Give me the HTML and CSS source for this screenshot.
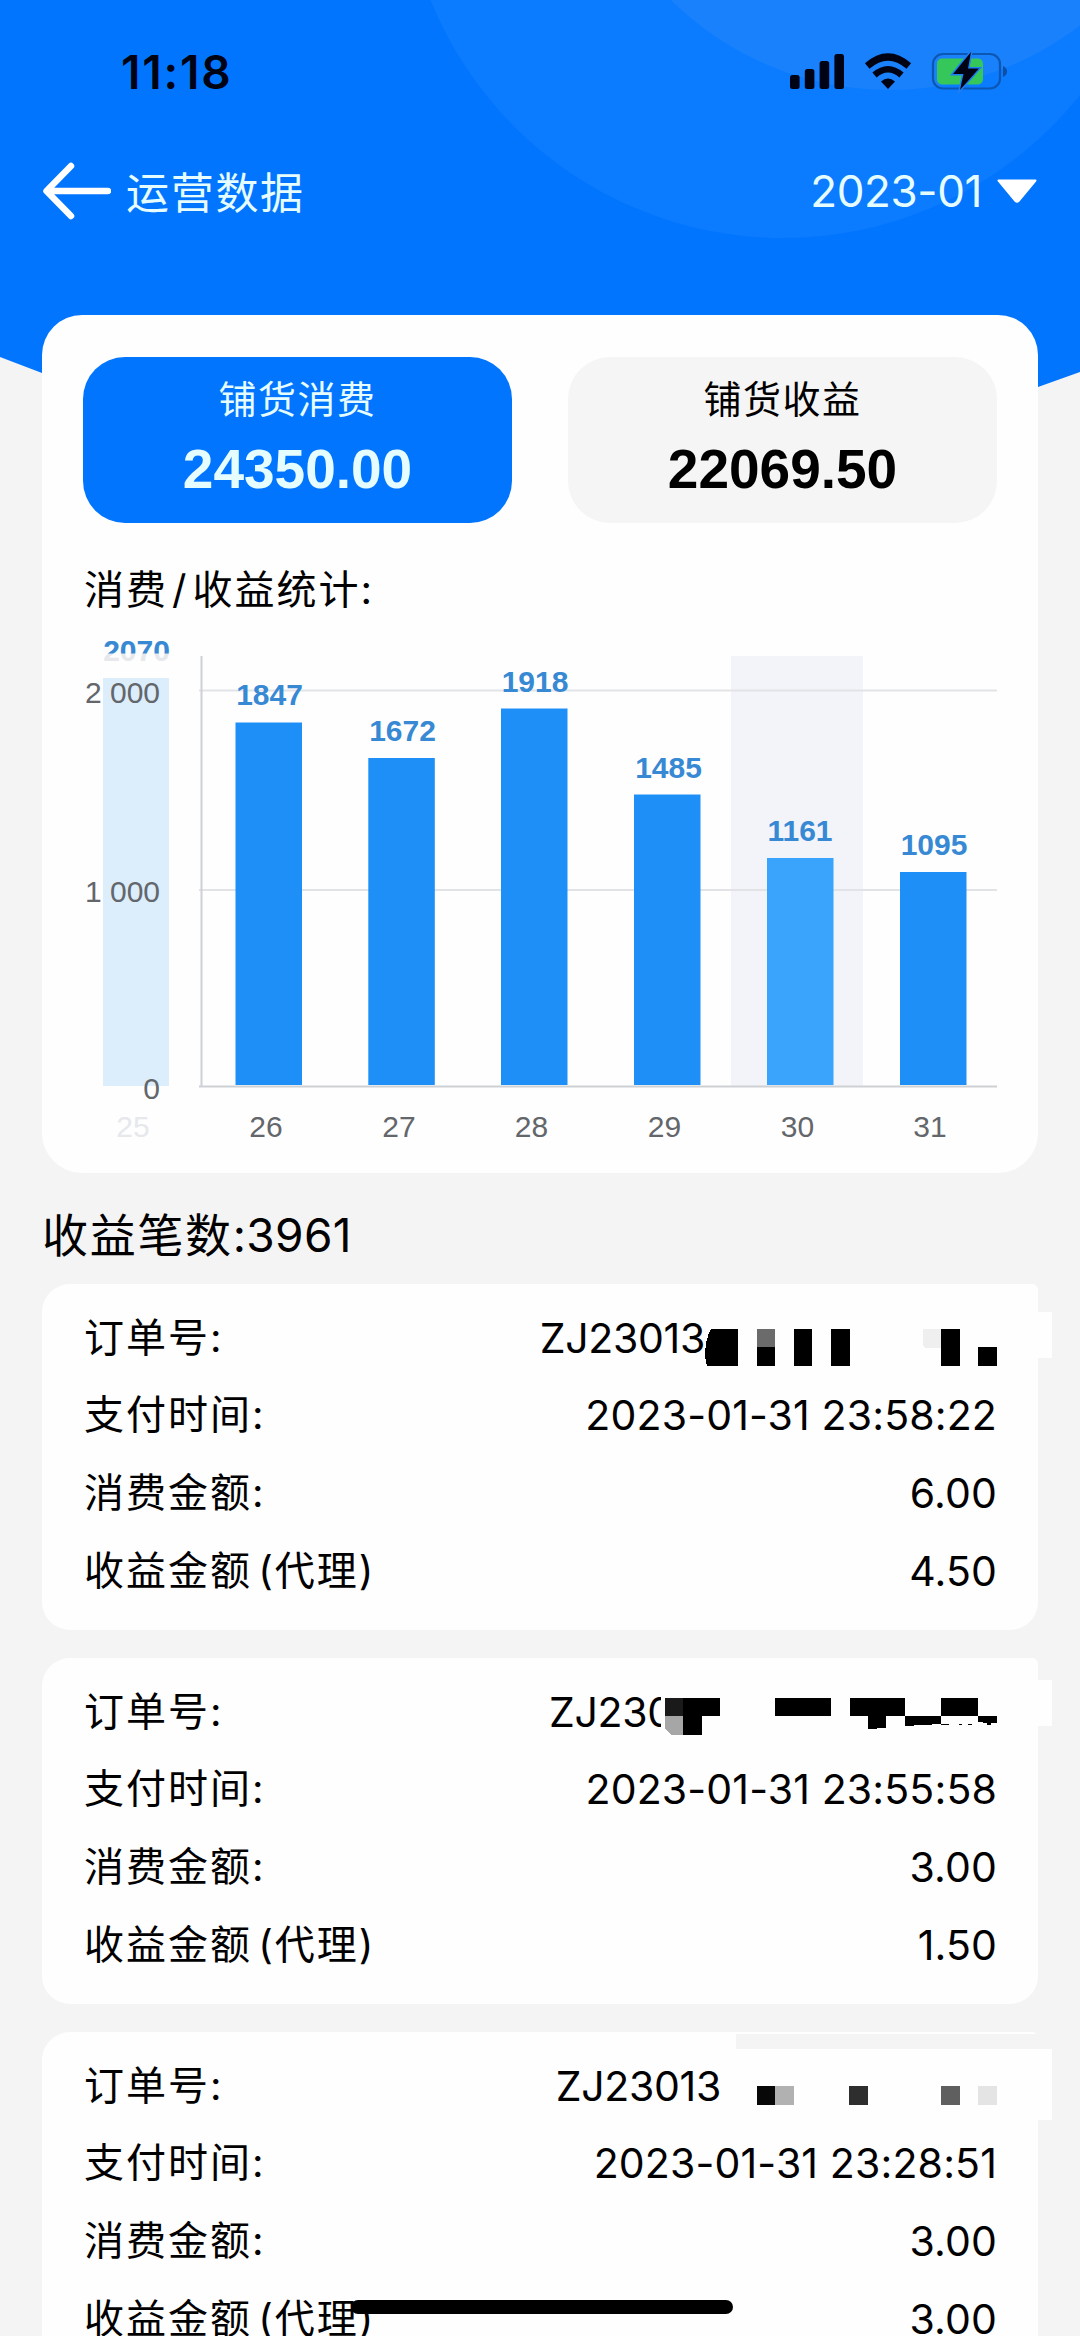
FILE: index.html
```html
<!DOCTYPE html>
<html lang="zh-CN">
<head>
    <meta charset="UTF-8">
    <title>运营数据</title>
    <link rel="stylesheet" href="styles.css">
</head>
<body>
    <div class="page">
        <svg class="backdrop" viewBox="0 0 1080 420">
            <path d="M0 0H1080V372L1038 387V420H42V373L0 357Z" fill="#0275ff"/>
            <circle cx="783" cy="-142" r="380" fill="#0b7bff"/>
            <circle cx="890" cy="-222" r="312" fill="#1981fb"/>
        </svg>

        <div class="status-bar">
            <span class="clock">11:18</span>
            <svg class="status-icons" width="220" height="44" viewBox="788 50 220 44">
                <g fill="#000314">
                    <rect x="790" y="75" width="9.6" height="14" rx="2.5"/>
                    <rect x="804.8" y="69" width="9.6" height="20" rx="2.5"/>
                    <rect x="819.6" y="61" width="9.6" height="28" rx="2.5"/>
                    <rect x="834.4" y="54" width="9.6" height="35" rx="2.5"/>
                    <path d="M888 89L881 81.5Q888 75.500 895 81.500Z"/>
                </g>
                <g fill="none" stroke="#000314">
                    <path d="M867.200 66Q888 48 908.800 66" stroke-width="7"/>
                    <path d="M874.500 75Q888 63.500 901.500 75" stroke-width="6.500"/>
                </g>
                <rect x="933" y="54" width="67" height="34.500" rx="10" fill="none" stroke="#0d57b4" stroke-width="2.200"/>
                <path d="M1003 66Q1007 68 1007 71.500T1003 77Z" fill="#0d4fa6"/>
                <rect x="937" y="58.500" width="46" height="26" rx="5" fill="#35c759"/>
                <path d="M971 52L953 74H963.500L960 90L979 68.500H968Z" fill="#000314" stroke="#1d7ff2" stroke-width="3" paint-order="stroke"/>
            </svg>
        </div>

        <div class="nav-bar">
            <svg width="68" height="58" viewBox="0 0 68 58">
                <path d="M28 4L3.500 29L28 54M4 29H65" fill="none" stroke="#fff" stroke-width="6.500" stroke-linecap="round" stroke-linejoin="round"/>
            </svg>
            <span class="nav-title">运营数据</span>
            <span class="month">2023-01</span>
            <svg width="42" height="24" viewBox="0 0 42 24">
                <path d="M2.500 1.500H39.500L22.500 22Q21 23.500 19.500 22Z" fill="#fff" stroke="#fff" stroke-width="2" stroke-linejoin="round"/>
            </svg>
        </div>

        <div class="card summary">
            <div class="tabs">
                <div class="tab active">
                    <div class="tab-label">铺货消费</div>
                    <div class="tab-value">24350.00</div>
                </div>
                <div class="tab">
                    <div class="tab-label">铺货收益</div>
                    <div class="tab-value">22069.50</div>
                </div>
            </div>
            <div class="chart-title">消费<span class="slash">/</span>收益统计:</div>
            <svg class="chart" viewBox="83 630 914 520">
                <defs>
                    <clipPath id="label-top"><rect x="90" y="630" width="100" height="23.500"/></clipPath>
                </defs>
                <rect x="731" y="656" width="132" height="430" fill="#f2f4f9"/>
                <g stroke="#e1e3e7" stroke-width="2">
                    <path d="M199 690.500H997M199 890H997"/>
                </g>
                <path d="M201.500 656V1087M199 1086.500H997" fill="none" stroke="#cdd0d4" stroke-width="2"/>

                <rect x="103" y="678" width="66" height="408" fill="#dcedfc"/>
                <g fill="#1f8ff8">
                    <rect x="235.500" y="722.500" width="66.500" height="362.500"/>
                    <rect x="368.300" y="758" width="66.500" height="327"/>
                    <rect x="501" y="708.500" width="66.500" height="376.500"/>
                    <rect x="634" y="794.500" width="66.500" height="290.500"/>
                    <rect x="767" y="858" width="66.500" height="227" fill="#3aa3fb"/>
                    <rect x="900" y="872" width="66.500" height="213"/>
                </g>

                <g class="bar-value">
                    <text class="faded" x="136.500" y="661">2070</text>
                    <text x="136.500" y="661" clip-path="url(#label-top)">2070</text>
                    <text x="269.500" y="705">1847</text>
                    <text x="402.500" y="741">1672</text>
                    <text x="535" y="691.500">1918</text>
                    <text x="668.500" y="777.500">1485</text>
                    <text x="800" y="840.500">1161</text>
                    <text x="934" y="855">1095</text>
                </g>
                <g class="axis-y">
                    <text x="160" y="702.500">2 000</text>
                    <text x="160" y="902">1 000</text>
                    <text x="160" y="1098.500">0</text>
                </g>
                <g class="axis-x">
                    <text class="faded" x="133" y="1137">25</text>
                    <text x="266" y="1137">26</text>
                    <text x="399" y="1137">27</text>
                    <text x="531.500" y="1137">28</text>
                    <text x="664.500" y="1137">29</text>
                    <text x="797.500" y="1137">30</text>
                    <text x="930" y="1137">31</text>
                </g>
            </svg>
        </div>

        <div class="count">收益笔数<span class="count-number">:3961</span></div>

        <div class="card order order-1">
            <div class="row">
                <span class="label">订单号:</span>
                <span class="value order-no">ZJ23013</span>
                <svg class="mask" width="292" height="37" viewBox="0 0 292 37" shape-rendering="crispEdges">
                    <path d="M6 0H33V37H2L0 28Q0 10 6 0ZM89 0h18v37h-18zM126 0h19v37h-19zM236 0h19v37h-19zM273 18h19v19h-19zM52 18h18v19h-18z"/>
                    <path d="M52 0h18v18h-18z" fill="#6b6b6b"/>
                    <path d="M218 0h18v19h-16l-2 -3z" fill="#efefef"/>
                </svg>
            </div>
            <div class="row"><span class="label">支付时间:</span><span class="value">2023-01-31 23:58:22</span></div>
            <div class="row"><span class="label">消费金额:</span><span class="value">6.00</span></div>
            <div class="row"><span class="label">收益金额 (代理)</span><span class="value">4.50</span></div>
        </div>

        <div class="card order order-2">
            <div class="row">
                <span class="label">订单号:</span>
                <span class="value order-no cut">ZJ230</span>
                <svg class="mask" width="332" height="37" viewBox="0 0 332 37" shape-rendering="crispEdges">
                    <path d="M18 0h37v18h-18v19h-19zM110 0h56v18h-56zM185 0h55v18h-19v12l-18 1v-13h-18zM276 0h37v18h-37zM240 18h36v8l-36 2zM313 18h19v7h-6v2h-4v-2l-9 -1z"/>
                    <path d="M276 26h8v1h-8zM294 26h3v1h-3zM303 26h4v1h-4z"/>
                    <path d="M0 0h18v18h-18z" fill="#1a1a1a"/>
                    <path d="M0 18h18v19h-12l-6 -6z" fill="#a6a6a6"/>
                </svg>
            </div>
            <div class="row"><span class="label">支付时间:</span><span class="value">2023-01-31 23:55:58</span></div>
            <div class="row"><span class="label">消费金额:</span><span class="value">3.00</span></div>
            <div class="row"><span class="label">收益金额 (代理)</span><span class="value">1.50</span></div>
        </div>

        <div class="card order order-3">
            <div class="row">
                <span class="label">订单号:</span>
                <span class="value order-no">ZJ23013</span>
                <svg class="mask" width="276" height="37" viewBox="0 0 276 37" shape-rendering="crispEdges">
                    <rect x="36" y="18" width="18" height="19" fill="#080808"/>
                    <rect x="54" y="18" width="19" height="19" fill="#b1b1b1"/>
                    <rect x="128" y="18" width="19" height="19" fill="#2e2e2e"/>
                    <rect x="220" y="18" width="19" height="19" fill="#5f5f5f"/>
                    <rect x="257" y="18" width="19" height="19" fill="#e4e4e4"/>
                </svg>
            </div>
            <div class="row"><span class="label">支付时间:</span><span class="value">2023-01-31 23:28:51</span></div>
            <div class="row"><span class="label">消费金额:</span><span class="value">3.00</span></div>
            <div class="row"><span class="label">收益金额 (代理)</span><span class="value">3.00</span></div>
        </div>

        <div class="home-indicator"></div>
    </div>
</body>
</html>
```
FILE: styles.css
```css
* {
    box-sizing: border-box;
}

body {
    margin: 0;
    background: #f4f4f4;
    font-family: Inter, "Noto Sans CJK SC", sans-serif;
    color: #000;
}

.page {
    position: relative;
    width: 1080px;
    height: 2336px;
    overflow: hidden;
}

.backdrop {
    position: absolute;
    top: 0;
    left: 0;
    width: 1080px;
    height: 420px;
    z-index: -1;
}

/* status bar */
.status-bar {
    display: flex;
    align-items: center;
    justify-content: space-between;
    height: 144px;
    padding: 0 72px 0 121px;
}

.clock {
    font-size: 46px;
    font-weight: 600;
    letter-spacing: 1.8px;
    color: #000314;
}

/* nav bar */
.nav-bar {
    display: flex;
    align-items: center;
    height: 94px;
    padding: 0 42px 0 43px;
    color: #e6fdff;
}

.nav-title {
    margin-left: 15px;
    margin-bottom: 3px;
    font-size: 43px;
    letter-spacing: 1.7px;
}

.month {
    margin-left: auto;
    margin-right: 14px;
    font-size: 44px;
    letter-spacing: -0.4px;
}

/* summary card */
.card {
    margin: 0 42px;
    background: #fefefe;
}

.summary {
    height: 858px;
    margin-top: 77px;
    padding: 42px 41px 0;
    border-radius: 40px;
}

.tabs {
    display: flex;
    justify-content: space-between;
}

.tab {
    width: 429px;
    height: 166px;
    padding-top: 14px;
    border-radius: 42px;
    background: #f5f5f5;
    text-align: center;
}

.tab.active {
    background: #0275ff;
    color: #e6fdff;
}

.tab-label {
    font-size: 38px;
    line-height: 56px;
    letter-spacing: 1.5px;
}

.tab-value {
    font-family: "Liberation Sans", Arial, sans-serif;
    font-size: 55px;
    font-weight: bold;
    line-height: 84px;
}

.chart-title {
    height: 107px;
    padding-top: 35px;
    padding-left: 1px;
    font-size: 40px;
    line-height: 64px;
    letter-spacing: 2px;
}

.slash {
    margin: 0 4px;
}

.chart {
    display: block;
    width: 914px;
    height: 520px;
    font-family: "Liberation Sans", Arial, sans-serif;
    font-size: 30px;
}

.bar-value {
    fill: #3789d3;
    font-weight: bold;
    text-anchor: middle;
}

.axis-y {
    fill: #63666b;
    text-anchor: end;
}

.axis-x {
    fill: #63666b;
    text-anchor: middle;
}

.chart .faded {
    fill: #e6e8ec;
}

/* order list */
.count {
    height: 111px;
    padding-left: 42px;
    font-size: 46px;
    line-height: 124px;
    letter-spacing: 1.7px;
}

.count-number {
    letter-spacing: 0.3px;
}

.order {
    position: relative;
    height: 346px;
    margin-bottom: 28px;
    padding: 15px 41px 0 42px;
    border-radius: 28px;
    border-top-right-radius: 6px;
}

/* strip sticking out of the right edge */
.order::after {
    content: "";
    position: absolute;
    top: 28px;
    right: -14px;
    width: 20px;
    height: 46px;
    background: #fefefe;
}

.order-2::after {
    top: 22px;
}

.order-3::after {
    top: 17px;
    height: 71px;
}

.order-3::before {
    content: "";
    position: absolute;
    top: 2px;
    right: 0;
    width: 302px;
    height: 15px;
    background: #f4f4f4;
}

.row {
    display: flex;
    align-items: center;
    height: 77.600px;
    font-size: 40px;
    line-height: 60px;
}

.label {
    margin-right: auto;
    letter-spacing: 2px;
    word-spacing: -7px;
}

.value {
    font-size: 41px;
    letter-spacing: 0.15px;
    white-space: nowrap;
}

.order-no {
    letter-spacing: -0.3px;
}

.mask {
    margin-top: 19px;
}

.order-2 .mask {
    margin-top: 9px;
}

.order-3 .mask {
    margin-top: 1px;
}

.cut {
    width: 112px;
    margin-right: 4px;
    overflow: hidden;
}

.home-indicator {
    position: absolute;
    left: 351px;
    top: 2300px;
    width: 382px;
    height: 14px;
    border-radius: 7px;
    background: #000;
}
```
